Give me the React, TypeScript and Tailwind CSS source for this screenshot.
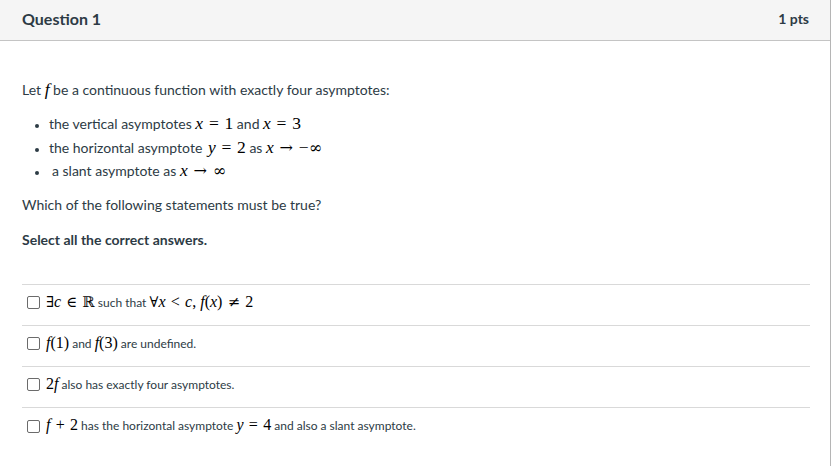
import React from 'react';

const mathFont = { fontFamily: '"Liberation Serif", "DejaVu Serif", serif' };
const symFont = { fontFamily: '"DejaVu Serif", "Liberation Serif", serif' };

function V({ children }: { children: React.ReactNode }) {
    // math variable, italic serif
    return <span className="italic" style={mathFont}>{children}</span>;
}

function S({ children }: { children: React.ReactNode }) {
    // symbols that Liberation draws too small
    return <span className="text-[0.92em]" style={symFont}>{children}</span>;
}

function M({ children, size = 'text-[17.5px]' }: { children: React.ReactNode; size?: string }) {
    return (
        <span className={`${size} leading-none text-[#000]`} style={mathFont}>
            {children}
        </span>
    );
}

function Op({ children }: { children: React.ReactNode }) {
    return <span className="mx-[0.33em]">{children}</span>;
}

function Answer({ children, last }: { children: React.ReactNode; last?: boolean }) {
    return (
        <div className={`flex h-[41px] items-center gap-[6px] pb-[4px] pl-[5px] ${last ? '' : 'border-b border-[#d9d9d9]'}`}>
            <span className="block h-[13px] w-[13px] shrink-0 rounded-[2px] border border-[#6b6b6b] bg-white" />
            <span className="text-[12px] text-[#2d3b45]">{children}</span>
        </div>
    );
}

export default function App() {
    return (
        <div className="h-[466px] w-[831px] border-r border-[#b5b5b5] bg-white text-[#2d3b45]" style={{ fontFamily: 'Lato, "Liberation Sans", sans-serif' }}>
            <div className="flex h-[41px] items-center justify-between border-b border-[#c4c4c4] bg-[#f5f5f5] pb-[3px] pl-[22px] pr-[21px]">
                <h2 className="text-[16px] font-bold leading-none">Question 1</h2>
                <span className="text-[14px] font-bold leading-none">1 pts</span>
            </div>

            <div className="px-[22px] pt-[38px]">
                <p className="text-[14px] leading-[21px]">
                    Let <M><V>f</V></M> be a continuous function with exactly four asymptotes:
                </p>
                <ul className="mt-[12px] list-disc pl-[27px] text-[14px] marker:text-[11px]">
                    <li className="h-[23.5px] leading-[23.5px]">
                        the vertical asymptotes <M><V>x</V><Op>=</Op>1</M> and <M><V>x</V><Op>=</Op>3</M>
                    </li>
                    <li className="h-[23.5px] leading-[23.5px]">
                        the horizontal asymptote <M><span className="ml-[2px]" /><V>y</V><Op>=</Op>2</M> as{' '}
                        <M><V>x</V><Op><S>→</S></Op>−<S>∞</S></M>
                    </li>
                    <li className="h-[23.5px] pl-[3px] leading-[23.5px]">
                        a slant asymptote as <M><V>x</V><Op><S>→</S></Op><S>∞</S></M>
                    </li>
                </ul>
                <p className="mt-[11px] text-[14px] leading-[21px]">Which of the following statements must be true?</p>
                <p className="mt-[14px] text-[14px] font-bold leading-[21px]">Select all the correct answers.</p>

                <div className="mt-[34px] border-t border-[#d9d9d9]" style={{ width: 788 }}>
                    <Answer>
                        <M size="text-[16px]"><S>∃</S><V>c</V><Op><S>∈</S></Op><S>ℝ</S></M> such that{' '}
                        <M size="text-[16px]"><S>∀</S><V>x</V><Op>&lt;</Op><V>c</V>, <V>f</V>(<V>x</V>)<Op><S>≠</S></Op>2</M>
                    </Answer>
                    <Answer>
                        <M size="text-[16px]"><V>f</V>(1)</M> and <M size="text-[16px]"><V>f</V>(3)</M> are undefined.
                    </Answer>
                    <Answer>
                        <M size="text-[16px]">2<V>f</V></M> also has exactly four asymptotes.
                    </Answer>
                    <Answer last>
                        <M size="text-[16px]"><V>f</V><Op>+</Op>2</M> has the horizontal asymptote{' '}
                        <M size="text-[16px]"><V>y</V><Op>=</Op>4</M> and also a slant asymptote.
                    </Answer>
                </div>
            </div>
        </div>
    );
}
